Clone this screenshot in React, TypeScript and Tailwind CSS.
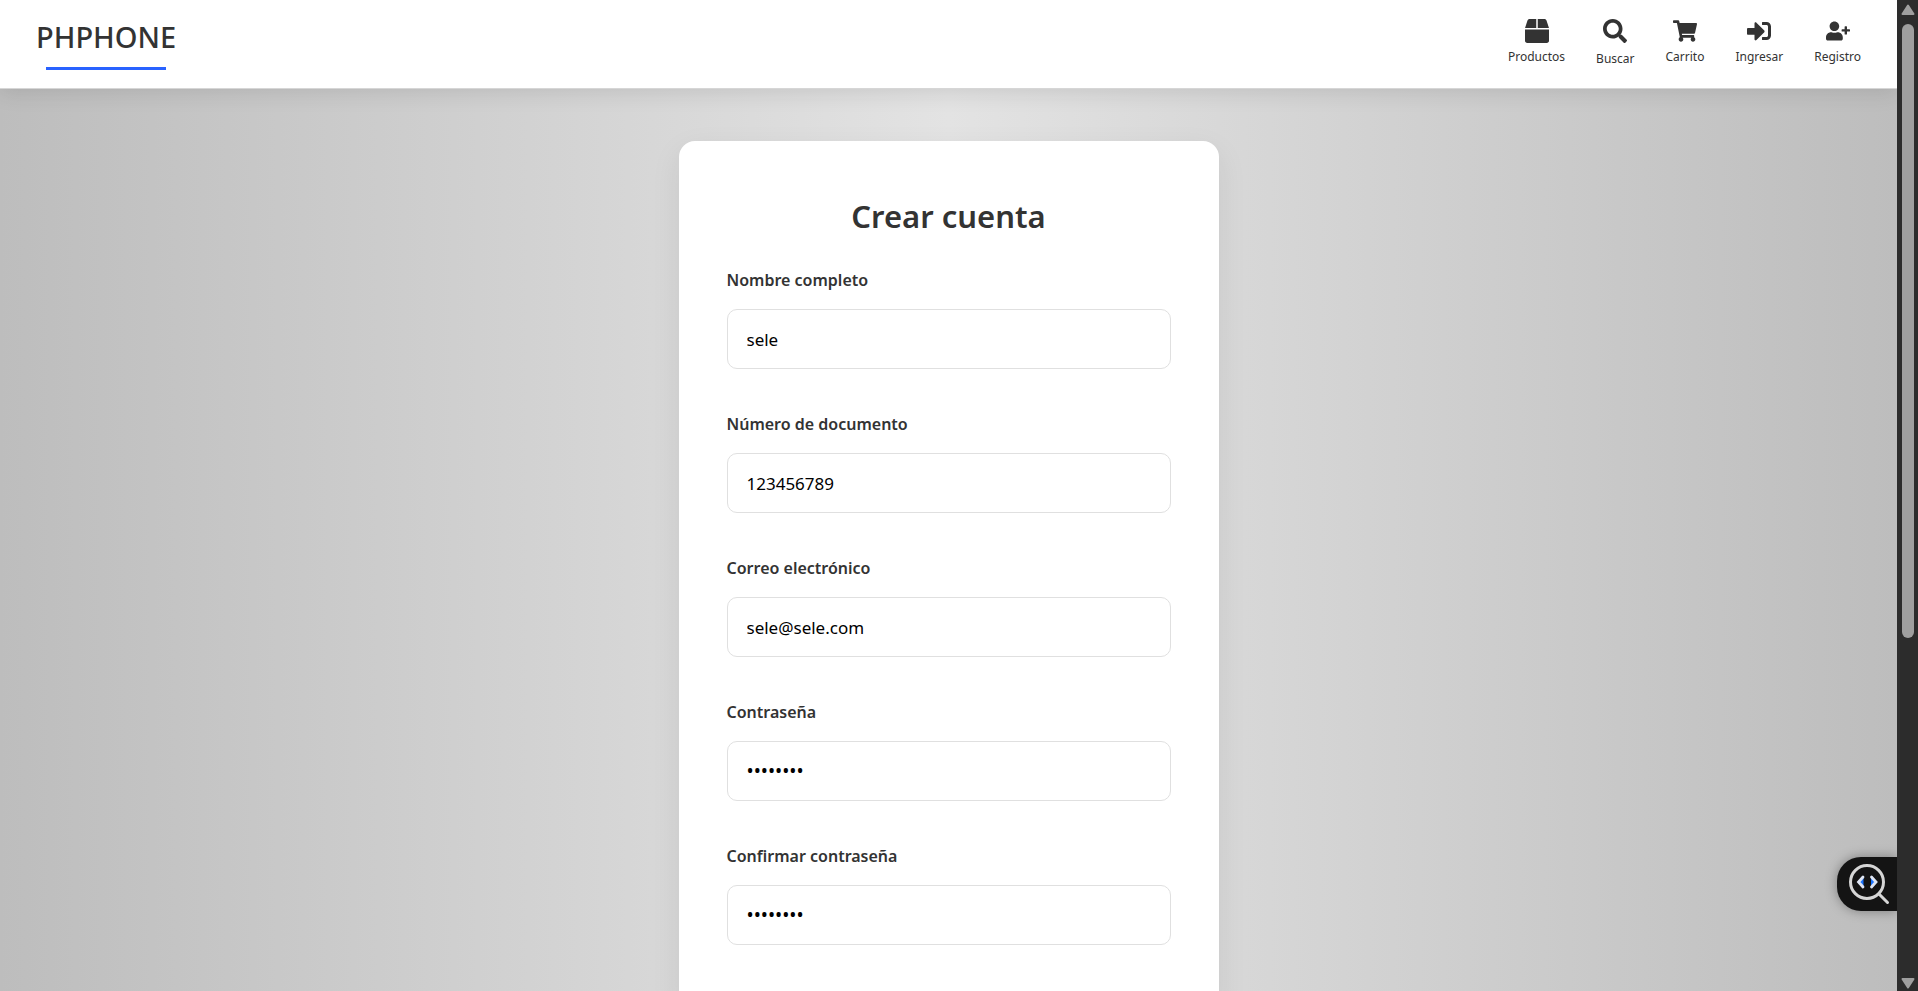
import { useId, type ReactNode } from "react";
import { FaBox, FaSearch, FaShoppingCart, FaSignInAlt, FaUserPlus } from "react-icons/fa";

type FieldProps = { label: string; type: string; value: string };

function Field({ label, type, value }: FieldProps) {
  const id = useId();
  const textSize = type === "password" ? "text-[19px]" : "text-[17px]";
  return (
    <div className="flex flex-col gap-[17px]">
      <label htmlFor={id} className="text-base leading-6 font-semibold text-[#333]">
        {label}
      </label>
      <input
        id={id}
        type={type}
        defaultValue={value}
        className={`h-15 w-full rounded-[10px] border border-[#e0e0e0] bg-white px-[19px] text-black outline-none ${textSize}`}
      />
    </div>
  );
}

function NavItem({ icon, label }: { icon: ReactNode; label: string }) {
  return (
    <a href="#" className="flex flex-col items-center gap-1 text-[#333]">
      {icon}
      <span className="text-xs leading-5">{label}</span>
    </a>
  );
}

function SearchButton() {
  return (
    <button type="button" className="flex flex-col items-center gap-1.5 text-[#333]">
      <FaSearch size={24} />
      <span className="text-xs leading-5">Buscar</span>
    </button>
  );
}

function Header() {
  return (
    <header className="relative flex h-[89px] shrink-0 items-start justify-between border-b border-[#d6d6d6] bg-white px-9 shadow-[0_4px_20px_rgba(0,0,0,0.1)]">
      <a href="#" className="flex flex-col items-center gap-2.5 pt-4 text-[#333]">
        <span className="text-[29px] leading-[41px] font-medium">PHPHONE</span>
        <span className="h-[3px] w-30 bg-[#2962ff]" />
      </a>
      <nav className="flex items-start gap-[31px] pt-[19px]">
        <NavItem icon={<FaBox size={24} />} label="Productos" />
        <SearchButton />
        <NavItem icon={<FaShoppingCart size={24} />} label="Carrito" />
        <NavItem icon={<FaSignInAlt size={24} />} label="Ingresar" />
        <NavItem icon={<FaUserPlus size={24} />} label="Registro" />
      </nav>
    </header>
  );
}

function InspectorButton() {
  return (
    <button
      type="button"
      aria-label="Inspeccionar"
      className="absolute right-0 bottom-20 flex h-[54px] w-15 items-center justify-center rounded-l-3xl bg-[#141414] pl-1 shadow-[0_0_12px_rgba(0,0,0,0.35)]"
    >
      <svg width="42" height="42" viewBox="0 0 42 42" fill="none" strokeLinecap="round">
        <circle cx="19" cy="19" r="16.5" stroke="#d6d6d6" strokeWidth="3" />
        <path d="M31 31l8.500 8.500" stroke="#d6d6d6" strokeWidth="3" />
        <path d="M15.500 14v10l-4-5zM23 14v10l4-5z" fill="#1a73ff" />
        <path d="M15 14l-4.500 5 4.500 5M23.500 14l4.500 5-4.500 5" stroke="#dfe6f5" strokeWidth="2.800" />
      </svg>
    </button>
  );
}

function Scrollbar() {
  return (
    <div aria-hidden="true" className="flex w-[21px] shrink-0 flex-col items-center gap-2 bg-[#2c2c2c] pt-1 pb-0.5">
      <svg width="14" height="12" viewBox="0 0 14 12">
        <path d="M7 1.500L12.500 10H1.500z" fill="#9f9f9f" stroke="#9f9f9f" strokeWidth="2" strokeLinejoin="round" />
      </svg>
      <div className="flex w-3 grow flex-col">
        <div className="h-[65%] rounded-full bg-[#9f9f9f]" />
      </div>
      <svg width="14" height="12" viewBox="0 0 14 12">
        <path d="M7 10.500L12.500 2H1.500z" fill="#9f9f9f" stroke="#9f9f9f" strokeWidth="2" strokeLinejoin="round" />
      </svg>
    </div>
  );
}

export default function App() {
  return (
    <div className="flex h-screen overflow-hidden font-['Noto_Sans',sans-serif]">
      <div className="relative flex min-w-0 grow flex-col overflow-hidden bg-linear-to-r from-[#bdbdbd] via-[#e3e3e3] to-[#bdbdbd]">
        <Header />
        <main className="flex min-h-0 grow justify-center px-4 pt-[52px]">
          <form className="flex h-max w-full max-w-[540px] flex-col rounded-2xl bg-white px-12 pt-12 pb-16 shadow-[0_10px_30px_rgba(0,0,0,0.08)]">
            <h1 className="mb-[25px] text-center text-[31px] leading-[54px] font-semibold text-[#333]">Crear cuenta</h1>
            <div className="flex flex-col gap-[43px]">
              <Field label="Nombre completo" type="text" value="sele" />
              <Field label="Número de documento" type="text" value="123456789" />
              <Field label="Correo electrónico" type="email" value="sele@sele.com" />
              <Field label="Contraseña" type="password" value="12345678" />
              <Field label="Confirmar contraseña" type="password" value="12345678" />
            </div>
          </form>
        </main>
        <InspectorButton />
      </div>
      <Scrollbar />
    </div>
  );
}
